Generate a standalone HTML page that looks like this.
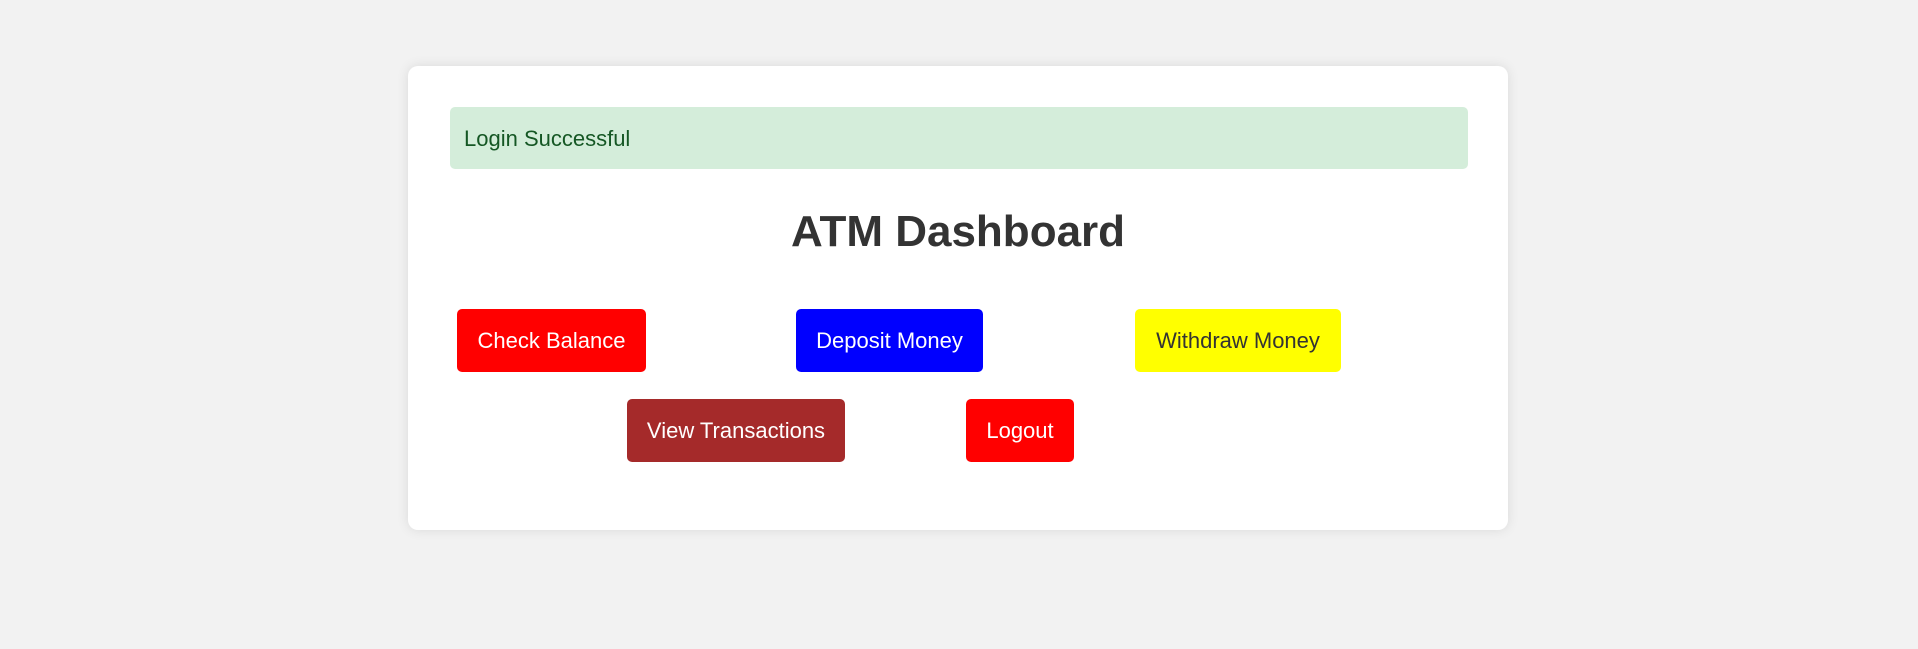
<!DOCTYPE html>
<html><head><style>
body{margin:0;width:1918px;height:649px;background:#f2f2f2;font-family:"Liberation Sans",Arial,sans-serif;position:relative;overflow:hidden}
.card{position:absolute;left:408px;top:66px;width:1100px;height:464px;background:#fff;border-radius:10px;box-shadow:0 0 12px rgba(0,0,0,0.1)}
.alert{position:absolute;left:450px;top:107px;width:1018px;height:62px;background:#d4edda;color:#155724;border-radius:5px;font-size:22px;line-height:64px;box-sizing:border-box;padding-left:14px}
h1{position:absolute;left:408px;width:1100px;top:201px;margin:0;text-align:center;font-size:44px;color:#333;line-height:62px}
.b{position:absolute;height:63px;line-height:63px;text-align:center;color:#fff;font-size:22px;border-radius:5px;white-space:nowrap}
</style></head><body>
<div class="card"></div>
<div class="alert">Login Successful</div>
<h1>ATM Dashboard</h1>
<div class="b" style="left:457px;top:309px;width:189px;background:#f00">Check Balance</div>
<div class="b" style="left:796px;top:309px;width:187px;background:#00f">Deposit Money</div>
<div class="b" style="left:1135px;top:309px;width:206px;background:#ff0;color:#333">Withdraw Money</div>
<div class="b" style="left:627px;top:399px;width:218px;background:#a52a2a">View Transactions</div>
<div class="b" style="left:966px;top:399px;width:108px;background:#f00">Logout</div>
</body></html>
